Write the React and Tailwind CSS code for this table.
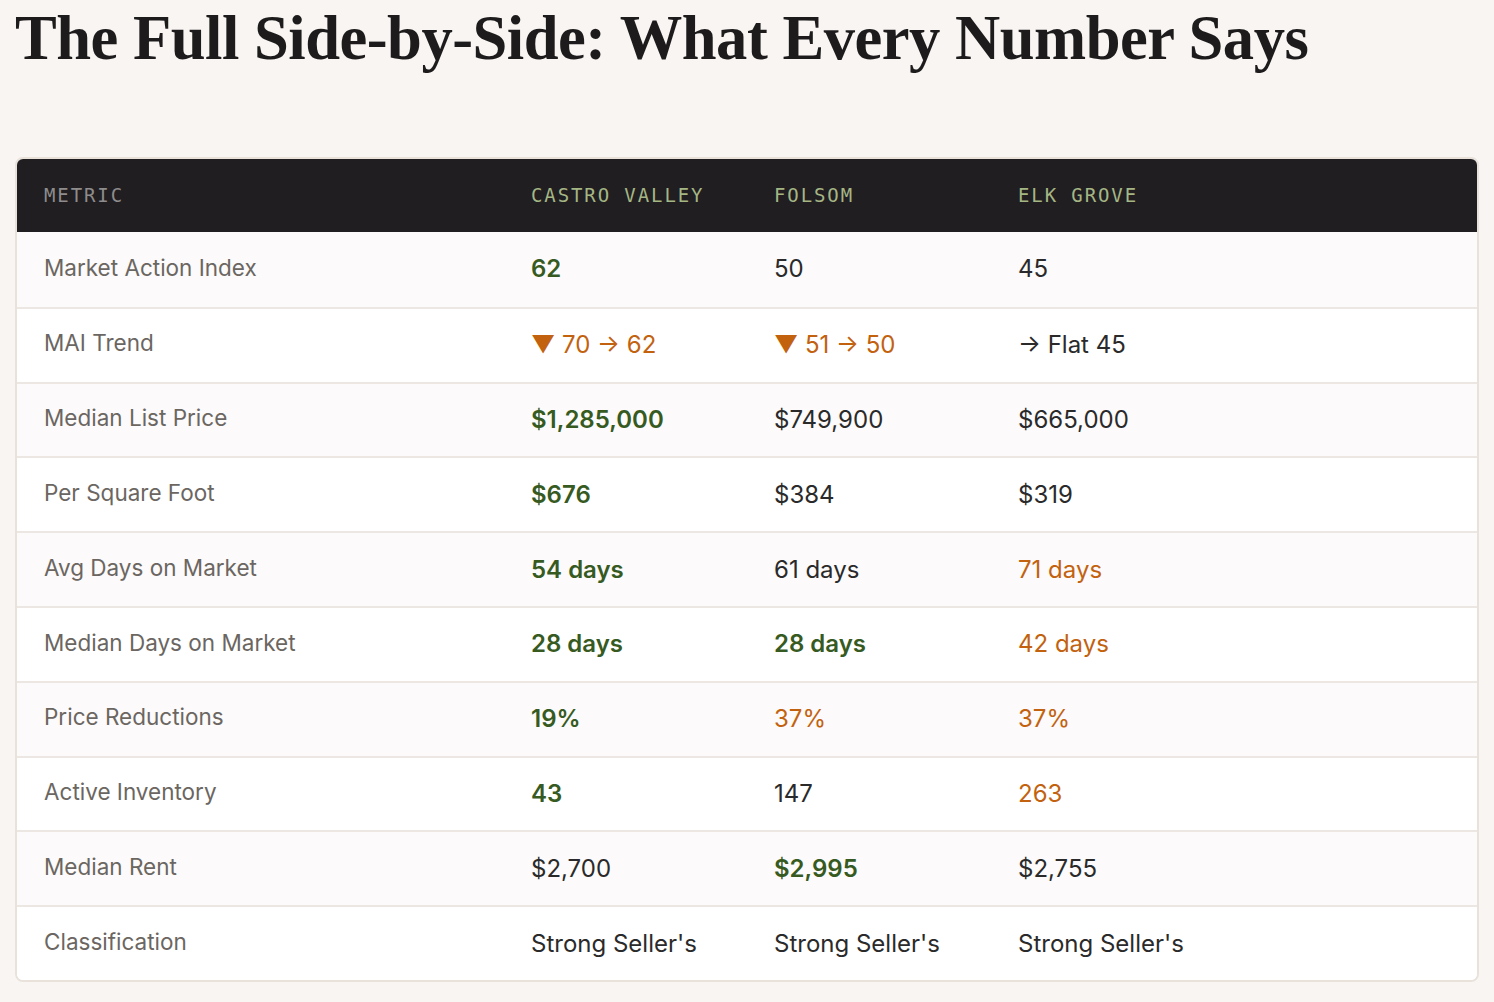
import React from "react";

const G = "green";
const O = "orange";

const rows = [
  { label: "Market Action Index", cells: [["62", G], ["50"], ["45"]] },
  { label: "MAI Trend", cells: [["▼ 70 → 62", O], ["▼ 51 → 50", O], ["→ Flat 45"]] },
  { label: "Median List Price", cells: [["$1,285,000", G], ["$749,900"], ["$665,000"]] },
  { label: "Per Square Foot", cells: [["$676", G], ["$384"], ["$319"]] },
  { label: "Avg Days on Market", cells: [["54 days", G], ["61 days"], ["71 days", O]] },
  { label: "Median Days on Market", cells: [["28 days", G], ["28 days", G], ["42 days", O]] },
  { label: "Price Reductions", cells: [["19%", G], ["37%", O], ["37%", O]] },
  { label: "Active Inventory", cells: [["43", G], ["147"], ["263", O]] },
  { label: "Median Rent", cells: [["$2,700"], ["$2,995", G], ["$2,755"]] },
  { label: "Classification", cells: [["Strong Seller's"], ["Strong Seller's"], ["Strong Seller's"]] },
];

const Cell = ({ value, tone }) => {
  let cls = "text-[#2a2a2a]";
  if (tone === G) cls = "text-[#365a1f] font-semibold";
  if (tone === O) cls = "text-[#c2620f]";
  return <div className={`flex items-center pl-px ${cls}`}>{value}</div>;
};

export default function App() {
  return (
    <div className="min-h-[1002px] bg-[#f8f5f3] px-[15px] pt-[5px] font-['Inter',sans-serif]">
      <h1 className="font-['Liberation_Serif',serif] font-bold text-[62.6px] leading-[66px] tracking-[-0.5px] text-[#1d1b1c]">
        The Full Side-by-Side: What Every Number Says
      </h1>

      <div className="mt-[86px] overflow-hidden rounded-[8px] border-2 border-[#e8e2da] bg-white">
        <div className="grid h-[73px] grid-cols-[486px_243px_244px_1fr] items-center bg-[#201e21] pl-[27px] font-['DejaVu_Sans_Mono',monospace] text-[19px] tracking-[0.1em]">
          <div className="text-[#8e8c8c]">METRIC</div>
          <div className="pl-px text-[#a5b685]">CASTRO VALLEY</div>
          <div className="pl-px text-[#a5b685]">FOLSOM</div>
          <div className="pl-px text-[#a5b685]">ELK GROVE</div>
        </div>
        {rows.map((r, i) => (
          <div
            key={r.label}
            className={`grid h-[74.8px] grid-cols-[486px_243px_244px_1fr] pl-[27px] text-[24px] ${
              i > 0 ? "border-t-2 border-[#ede7e3]" : ""
            } ${i % 2 === 0 ? "bg-[#fcfafa]" : "bg-white"}`}
          >
            <div className="flex items-center pb-[4px] text-[22.5px] text-[#6b6661]">{r.label}</div>
            {r.cells.map(([v, tone], j) => (
              <Cell key={j} value={v} tone={tone} />
            ))}
          </div>
        ))}
      </div>
    </div>
  );
}
